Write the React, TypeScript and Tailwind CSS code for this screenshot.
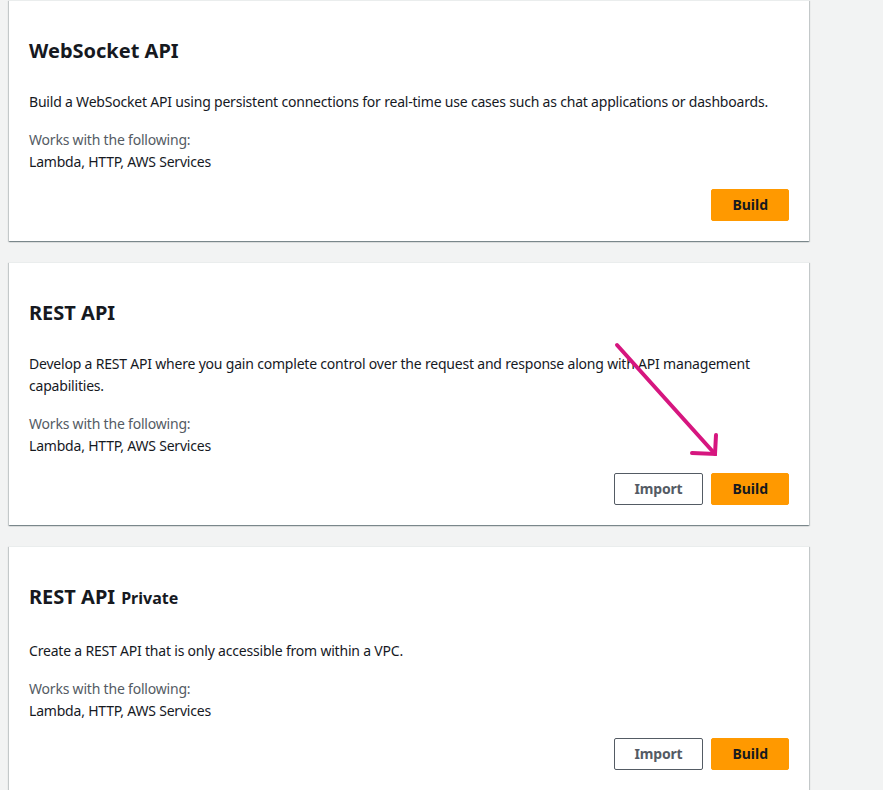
import React from "react";

type Api = {
  title: string;
  tag?: string;
  desc: React.ReactNode;
  canImport?: boolean;
};

const apis: Api[] = [
  {
    title: "WebSocket API",
    desc: "Build a WebSocket API using persistent connections for real-time use cases such as chat applications or dashboards.",
  },
  {
    title: "REST API",
    desc: (
      <>
        Develop a REST API where you gain complete control over the request and response along with API management
        <br />
        capabilities.
      </>
    ),
    canImport: true,
  },
  {
    title: "REST API",
    tag: "Private",
    desc: "Create a REST API that is only accessible from within a VPC.",
    canImport: true,
  },
];

function ApiCard({ api }: { api: Api }) {
  return (
    <div className="w-[800px] bg-white border-t border-[#eaeded] pt-[38px] px-5 pb-5 shadow-[0_1px_1px_0_rgba(0,28,36,0.3),1px_1px_1px_0_rgba(0,28,36,0.15),-1px_1px_1px_0_rgba(0,28,36,0.15)]">
      <h2 className="text-[20px] leading-6 font-bold text-[#16191f]">
        {api.title}
        {api.tag && <span className="ml-1.5 text-base font-bold">{api.tag}</span>}
      </h2>
      <p
        className={`${api.tag ? "mt-[30px]" : "mt-[28px]"} text-sm leading-[22px] tracking-[-0.2px] text-[#16191f]`}
      >
        {api.desc}
      </p>
      <div className="mt-4 text-sm leading-[22px] tracking-[-0.2px]">
        <div className="text-[#545b64]">Works with the following:</div>
        <div className="text-[#16191f]">Lambda, HTTP, AWS Services</div>
      </div>
      <div className="mt-4 flex justify-end gap-2">
        {api.canImport && (
          <button className="h-8 px-5 rounded-[2px] border border-[#545b64] bg-white text-sm font-bold tracking-[-0.2px] text-[#545b64]">
            Import
          </button>
        )}
        <button className="h-8 px-5 rounded-[2px] border border-[#ff9900] bg-[#ff9900] text-sm font-bold text-[#16191f]">
          Build
        </button>
      </div>
    </div>
  );
}

export default function App() {
  return (
    <div
      className="relative min-h-[790px] bg-[#f2f3f3] pl-[9px] overflow-hidden"
      style={{ fontFamily: '"Noto Sans", "Open Sans", Arial, sans-serif' }}
    >
      <div className="flex flex-col gap-[21px]">
        {apis.map((api, i) => (
          <ApiCard key={i} api={api} />
        ))}
      </div>

      {/* annotation arrow */}
      <svg className="absolute left-0 top-0 pointer-events-none" width="883" height="790">
        <g stroke="#d6167f" strokeWidth="4" strokeLinecap="round" fill="none">
          <path d="M617 345 L715 454" />
          <path d="M716 435 L715 454 L692 453" />
        </g>
      </svg>
    </div>
  );
}
